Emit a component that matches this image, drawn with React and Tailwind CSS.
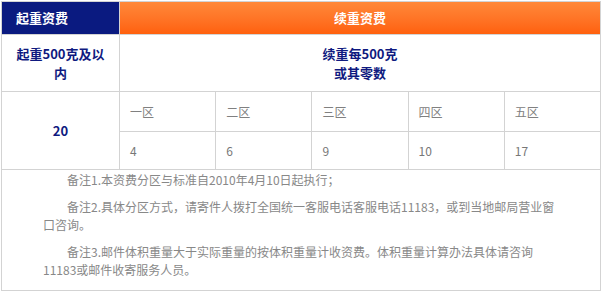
import React from "react";

const zones = [
  { name: "一区", price: 4 },
  { name: "二区", price: 6 },
  { name: "三区", price: 9 },
  { name: "四区", price: 10 },
  { name: "五区", price: 17 },
];

const notes = [
  "备注1.本资费分区与标准自2010年4月10日起执行；",
  "备注2.具体分区方式，请寄件人拨打全国统一客服电话客服电话11183，或到当地邮局营业窗口咨询。",
  "备注3.邮件体积重量大于实际重量的按体积重量计收资费。体积重量计算办法具体请咨询11183或邮件收寄服务人员。",
];

function App() {
  return (
    <div className="w-[605px] h-[295px] bg-white pt-px pl-px font-['Noto_Sans_CJK_SC',sans-serif]">
      <div
        className="grid w-[600px] h-[290px] gap-px p-px bg-[#d3d3d3]
          grid-cols-[117px_repeat(5,1fr)]
          grid-rows-[32px_56px_39px_37px_1fr]"
      >
        {/* header */}
        <div className="bg-[#0a1a80] flex items-center pl-[14px] text-[13px] font-bold text-white">
          起重资费
        </div>
        <div className="col-span-5 bg-linear-to-b from-[#ff8838] to-[#ff600c] flex items-center justify-center text-[13px] font-bold text-white">
          续重资费
        </div>

        {/* second row */}
        <div className="bg-white flex flex-col items-center justify-center text-center text-[13px] leading-[19px] font-bold text-[#0f1a80]">
          <span>起重500克及以</span>
          <span>内</span>
        </div>
        <div className="col-span-5 bg-white flex flex-col items-center justify-center text-center text-[13px] leading-[19px] font-bold text-[#0f1a80]">
          <span>续重每500克</span>
          <span>或其零数</span>
        </div>

        {/* price rows */}
        <div className="row-span-2 bg-white flex items-center justify-center text-[13px] font-bold text-[#0f1a80]">
          20
        </div>
        {zones.map((z) => (
          <div
            key={z.name}
            className="bg-white flex items-center pl-[10px] text-[12px] text-[#808080]"
          >
            {z.name}
          </div>
        ))}
        {zones.map((z) => (
          <div
            key={z.name + "-price"}
            className="bg-white flex items-center pl-[10px] text-[12px] text-[#777777]"
          >
            {z.price}
          </div>
        ))}

        {/* notes */}
        <div className="col-span-6 bg-white pt-px px-[41px] flex flex-col gap-[9px] text-[12px] leading-[18px] text-[#888888]">
          {notes.map((n) => (
            <p key={n} className="indent-[24px]">
              {n}
            </p>
          ))}
        </div>
      </div>
    </div>
  );
}

export default App;
